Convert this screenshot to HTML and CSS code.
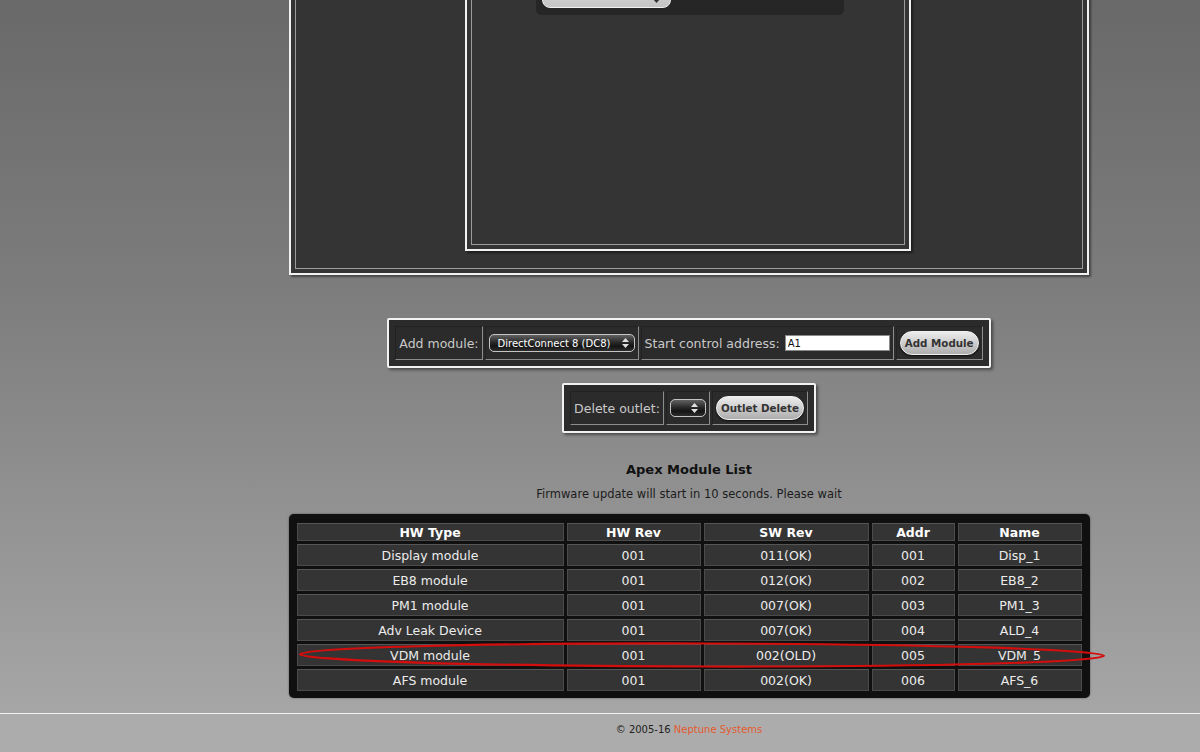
FILE: index.html
```html
<!DOCTYPE html>
<html lang="en">
<head>
<meta charset="utf-8">
<title>Apex Module Setup</title>
<link rel="stylesheet" href="styles.css">
</head>
<body>
<div class="page">
  <aside class="side"></aside>
  <main class="main">
    <section class="frame panel">
      <div class="frame-line panel-body">
        <div class="frame sub">
          <div class="frame-line sub-body">
            <div class="toolbar">
              <span class="pick">
                <svg class="updown" viewBox="0 0 7 10" width="7" height="10"><path d="M0 4 3.5 0 7 4Z M0 6 3.5 10 7 6Z"/></svg>
              </span>
            </div>
          </div>
        </div>
      </div>
    </section>

    <form class="ctl add">
      <div class="cell">Add module:</div>
      <div class="cell">
        <span class="select wide">DirectConnect 8 (DC8)
          <svg class="updown" viewBox="0 0 7 10" width="7" height="10"><path d="M0 4 3.5 0 7 4Z M0 6 3.5 10 7 6Z"/></svg>
        </span>
      </div>
      <div class="cell">Start control address: <input class="addr" type="text" value="A1"></div>
      <div class="cell"><button class="btn add-btn" type="button">Add Module</button></div>
    </form>

    <form class="ctl del">
      <div class="cell">Delete outlet:</div>
      <div class="cell">
        <span class="select narrow">
          <svg class="updown" viewBox="0 0 7 10" width="7" height="10"><path d="M0 4 3.5 0 7 4Z M0 6 3.5 10 7 6Z"/></svg>
        </span>
      </div>
      <div class="cell"><button class="btn del-btn" type="button">Outlet Delete</button></div>
    </form>

    <h2 class="title">Apex Module List</h2>
    <p class="note">Firmware update will start in 10 seconds. Please wait</p>

    <div class="list">
      <table class="modules">
        <colgroup>
          <col class="c-type"><col class="c-hw"><col class="c-sw"><col class="c-addr"><col class="c-name">
        </colgroup>
        <thead>
          <tr><th>HW Type</th><th>HW Rev</th><th>SW Rev</th><th>Addr</th><th>Name</th></tr>
        </thead>
        <tbody>
          <tr><td>Display module</td><td>001</td><td>011(OK)</td><td>001</td><td>Disp_1</td></tr>
          <tr><td>EB8 module</td><td>001</td><td>012(OK)</td><td>002</td><td>EB8_2</td></tr>
          <tr><td>PM1 module</td><td>001</td><td>007(OK)</td><td>003</td><td>PM1_3</td></tr>
          <tr><td>Adv Leak Device</td><td>001</td><td>007(OK)</td><td>004</td><td>ALD_4</td></tr>
          <tr><td>VDM module</td><td>001</td><td>002(OLD)</td><td>005</td><td>VDM_5</td></tr>
          <tr><td>AFS module</td><td>001</td><td>002(OK)</td><td>006</td><td>AFS_6</td></tr>
        </tbody>
      </table>
      <!-- red marker loop around the outdated module -->
      <svg class="mark" viewBox="0 0 830 170" width="830" height="170">
        <ellipse cx="413" cy="141" rx="402" ry="11.5" fill="none" stroke="#d40d0d" stroke-width="2.2" transform="rotate(0.12 413 141)"/>
      </svg>
    </div>
  </main>
</div>
<footer class="foot">
  <div></div>
  <div class="copy">&copy; 2005-16 <span class="brand">Neptune Systems</span></div>
</footer>
</body>
</html>
```

FILE: styles.css
```css
* { box-sizing: border-box; }

html, body {
  margin: 0;
  height: 100%;
}

body {
  font-family: "DejaVu Sans", Verdana, sans-serif;
  background: #acacac;
  overflow: hidden;
}

/* page body with the gray backdrop */
.page {
  display: grid;
  grid-template-columns: 289px 800px;
  height: 713px;
  overflow: hidden;
  background: linear-gradient(#696969 0, #7c7c7c 280px, #8d8d8d 460px, #a6a6a6 713px);
}

.main {
  display: flex;
  flex-direction: column;
  align-items: center;
}

/* double-line framed boxes */
.frame {
  border: 2px solid #f2f2f2;
  padding: 4px;
  background: #343434;
  box-shadow: 2px 2px 2px rgba(0, 0, 0, 0.45);
}

.frame-line {
  height: 100%;
  border: 1px solid #9c9c9c;
}

.panel {
  width: 800px;
  height: 475px;
  margin-top: -200px;
}

.panel-body {
  display: flex;
  flex-direction: column;
  justify-content: flex-end;
  align-items: center;
  padding-bottom: 17px;
}

.sub {
  width: 446px;
  height: 300px;
  margin-left: -2px;
}

.sub-body {
  display: flex;
  justify-content: center;
}

.toolbar {
  width: 308px;
  height: 57px;
  margin-left: 4px;
  background: #262626;
  border-radius: 0 0 5px 5px;
  display: flex;
  align-items: flex-end;
  padding: 0 0 7px 6px;
}

.pick {
  position: relative;
  width: 129px;
  height: 20px;
  background: linear-gradient(#d4d4d4, #c4c4c4);
  border: 1px solid #f0f0f0;
  border-radius: 8px;
  display: flex;
  align-items: center;
  justify-content: flex-end;
  padding-right: 10px;
}

.pick .updown { fill: #333; }

/* control strips */
.ctl {
  display: flex;
  gap: 2px;
  margin: 0;
  padding: 6px;
  background: #2b2b2b;
  border: 2px solid #f2f2f2;
  border-radius: 2px;
  box-shadow: 2px 2px 3px rgba(0, 0, 0, 0.45);
}

.add { margin-top: 43px; }
.del { margin-top: 15px; }

.cell {
  height: 34px;
  display: flex;
  align-items: center;
  gap: 5px;
  padding: 0 3px;
  border: 1px solid;
  border-color: #222 #8d8d8d #8d8d8d #222;
  color: #c9c9c9;
  font-size: 12.5px;
  white-space: nowrap;
}

.select {
  height: 18px;
  display: flex;
  align-items: center;
  justify-content: space-between;
  border: 1px solid #c4c4c4;
  border-radius: 5px;
  background: linear-gradient(#626262, #2a2a2a 45%, #141414 70%, #2e2e2e);
  color: #fff;
  font-size: 10px;
}

.select .updown { fill: #e0e0e0; }

.wide {
  width: 146px;
  padding: 0 5px 0 8px;
}

.narrow {
  width: 36px;
  justify-content: flex-end;
  padding-right: 7px;
}

.addr {
  width: 105px;
  height: 16px;
  margin: 0;
  padding: 0 2px;
  border: 1px solid #8a8a8a;
  background: #fff;
  color: #111;
  font-family: "DejaVu Sans", Verdana, sans-serif;
  font-size: 10px;
}

.btn {
  height: 24px;
  padding: 0;
  border: 1px solid #f0f0f0;
  border-radius: 12px;
  background: linear-gradient(#ececec, #cdcdcd 50%, #adadad);
  box-shadow: 0 1px 2px rgba(0, 0, 0, 0.7);
  color: #333;
  font-family: "DejaVu Sans", Verdana, sans-serif;
  font-size: 10.3px;
  font-weight: bold;
}

.add-btn { width: 79px; }
.del-btn { width: 88px; }

/* module list */
.title {
  margin: 27px 0 0;
  font-size: 13px;
  line-height: 20px;
  color: #111;
}

.note {
  margin: 6px 0 0;
  font-size: 11.5px;
  line-height: 16px;
  color: #1c1c1c;
}

.list {
  position: relative;
  width: 801px;
  margin-top: 12px;
  padding: 6px 5px 4px;
  background: #101010;
  border-radius: 5px;
  box-shadow: 0 0 2px rgba(0, 0, 0, 0.5);
}

.modules {
  width: 100%;
  table-layout: fixed;
  border-collapse: separate;
  border-spacing: 3px;
}

.c-type { width: 267px; }
.c-hw { width: 134px; }
.c-sw { width: 165px; }
.c-addr { width: 83px; }
.c-name { width: 124px; }

.modules th,
.modules td {
  padding: 0;
  text-align: center;
  font-size: 12.5px;
  background: #343434;
  border: 1px solid #4b4b4b;
  border-top-color: #565656;
  white-space: nowrap;
}

.modules th {
  height: 18px;
  color: #fff;
  font-weight: bold;
}

.modules td {
  height: 22px;
  color: #ececec;
}

.mark {
  position: absolute;
  left: 0;
  top: 0;
  overflow: visible;
  pointer-events: none;
}

/* footer */
.foot {
  display: grid;
  grid-template-columns: 289px 800px;
  height: 39px;
  border-top: 1px solid #f2f2f2;
  background: #acacac;
}

.copy {
  padding-top: 9px;
  text-align: center;
  font-size: 10px;
  line-height: 14px;
  color: #222;
}

.brand { color: #e45a2e; }
```
